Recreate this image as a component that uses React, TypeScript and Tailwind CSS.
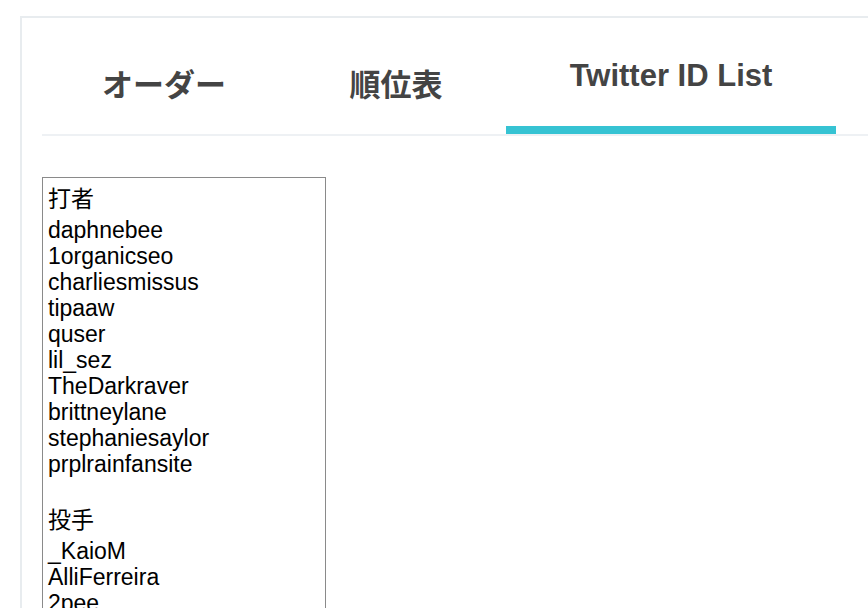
import React from 'react';

const batters = [
  'daphnebee',
  '1organicseo',
  'charliesmissus',
  'tipaaw',
  'quser',
  'lil_sez',
  'TheDarkraver',
  'brittneylane',
  'stephaniesaylor',
  'prplrainfansite',
];

const pitchers = ['_KaioM', 'AlliFerreira', '2pee'];

const tabs = [
  { label: 'オーダー', width: 'w-[244px]', active: false },
  { label: '順位表', width: 'w-[220px]', active: false },
  { label: 'Twitter ID List', width: 'w-[330px]', active: true },
];

const font = { fontFamily: '"Liberation Sans", "Noto Sans CJK JP", sans-serif' };

function Tabs() {
  return (
    <div className="flex border-b-2 border-[#eef1f4] h-[102px]">
      {tabs.map((t) => (
        <div
          key={t.label}
          className={`${t.width} relative flex justify-center text-[31px] font-bold text-[#444] ${
            t.active ? 'pt-[22px]' : 'pt-[32px]'
          }`}
        >
          <span className="leading-[40px]">{t.label}</span>
          {t.active && <div className="absolute left-0 right-0 bottom-0 h-[8px] bg-[#36c3d3]" />}
        </div>
      ))}
    </div>
  );
}

function IdList() {
  return (
    <div className="mt-[41px] w-[284px] h-[500px] border border-[#8a8a8a] px-[5px] pt-[6px] text-[23px] text-black overflow-hidden">
      <div className="leading-[30px] h-[33px]">打者</div>
      {batters.map((id) => (
        <div key={id} className="leading-[26px]">{id}</div>
      ))}
      <div className="h-[28px]" />
      <div className="leading-[30px] h-[33px]">投手</div>
      {pitchers.map((id) => (
        <div key={id} className="leading-[26px]">{id}</div>
      ))}
    </div>
  );
}

export default function App() {
  return (
    <div className="w-[868px] h-[608px] overflow-hidden bg-white pt-[16px] pl-[20px]" style={font}>
      <div className="w-[900px] h-[700px] border-l-2 border-t-2 border-[#e8ecef] pl-[20px] pt-[16px]">
        <Tabs />
        <IdList />
      </div>
    </div>
  );
}
